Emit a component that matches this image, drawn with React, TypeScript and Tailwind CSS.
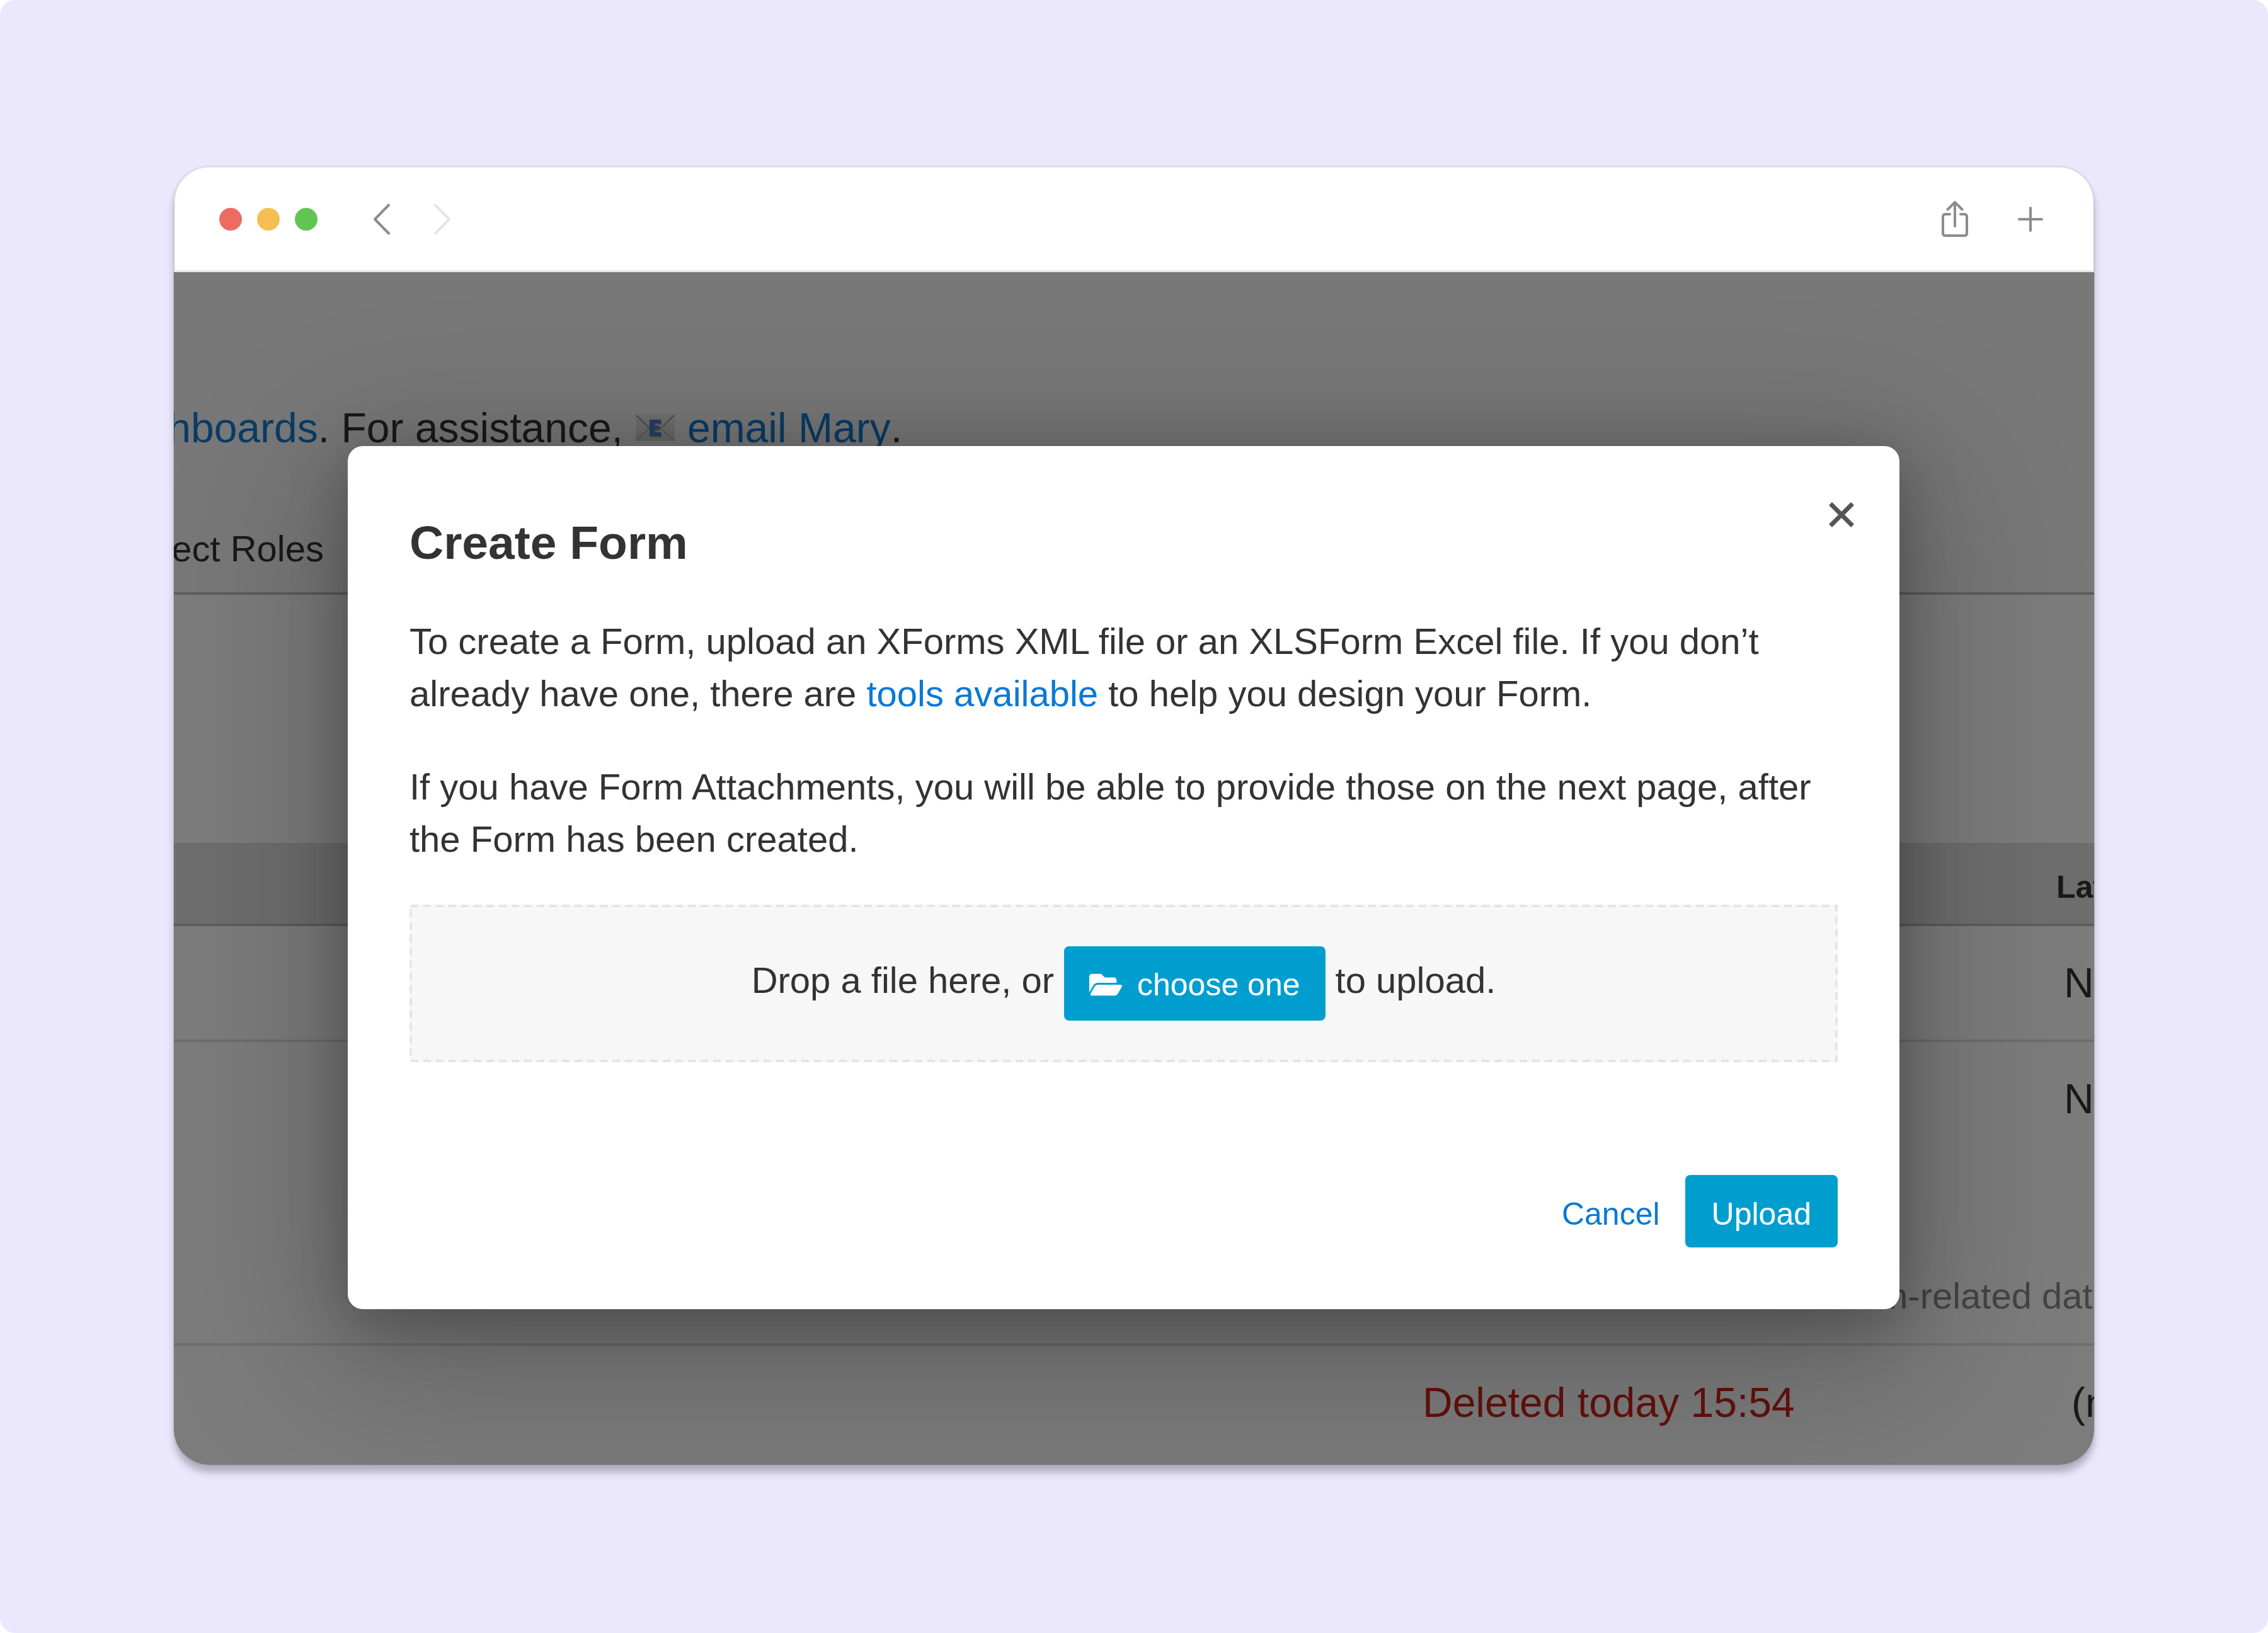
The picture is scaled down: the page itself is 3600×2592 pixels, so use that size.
import { FaFolderOpen } from 'react-icons/fa';

const rows = [
  { id: 1, status: '', latest: 'None' },
  { id: 2, status: '', latest: 'None' },
];

function WindowBar() {
  return (
    <div className="flex h-[168px] items-center justify-between rounded-t-[56px] border-2 border-b-3 border-[#e5e5e5] bg-white pr-[78px] pl-[70px]">
      <div className="flex items-center">
        <div className="flex gap-6">
          <span className="size-9 rounded-full bg-[#ed6b60]" />
          <span className="size-9 rounded-full bg-[#f4bf50]" />
          <span className="size-9 rounded-full bg-[#61c554]" />
        </div>
        <button aria-label="Back" className="ml-[87px]">
          <svg width="30" height="52" viewBox="0 0 30 52" fill="none" stroke="#8c8c8c" strokeWidth="4" strokeLinecap="round" strokeLinejoin="round">
            <path d="M26 3.500L4 26L26 48.500" />
          </svg>
        </button>
        <button aria-label="Forward" className="ml-[66px]">
          <svg width="30" height="52" viewBox="0 0 30 52" fill="none" stroke="#e5e5e5" strokeWidth="4" strokeLinecap="round" strokeLinejoin="round">
            <path d="M4 3.500L26 26L4 48.500" />
          </svg>
        </button>
      </div>
      <div className="flex items-center gap-[78px]">
        <button aria-label="Share">
          <svg width="42" height="58" viewBox="0 0 42 58" fill="none" stroke="#8c8c8c" strokeWidth="4" strokeLinecap="round" strokeLinejoin="round">
            <path d="M21 40V2M9.500 13.500L21 2L32.500 13.500" />
            <path d="M13 21H6Q2 21 2 25V51Q2 55 6 55H36Q40 55 40 51V25Q40 21 36 21H30" />
          </svg>
        </button>
        <button aria-label="New tab">
          <svg width="42" height="42" viewBox="0 0 42 42" fill="none" stroke="#8c8c8c" strokeWidth="4" strokeLinecap="round">
            <path d="M21 3V39M3 21H39" />
          </svg>
        </button>
      </div>
    </div>
  );
}

function MailIcon() {
  return (
    <svg width="62" height="42" viewBox="0 0 62 42" className="mx-5 shrink-0">
      <defs>
        <linearGradient id="paper" x1="0" y1="0" x2="0" y2="1">
          <stop offset="0" stopColor="#e6e6e6" />
          <stop offset="1" stopColor="#d0d0d0" />
        </linearGradient>
      </defs>
      <rect width="62" height="42" fill="url(#paper)" />
      <path d="M1 41L20 24M61 41L42 24" fill="none" stroke="#b4b4b4" strokeWidth="2" />
      <path d="M1 1L22 22Q31 30 40 22L61 1" fill="none" stroke="#999999" strokeWidth="2" />
      <path d="M23 10H41V16H31V20H39V25H31V30H41V36H23Z" fill="#a0a0a0" />
      <path d="M22 8H40V14H30V18H38V23H30V28H40V34H22Z" fill="#4a80c4" />
    </svg>
  );
}

function ProjectPage() {
  return (
    <div className="overflow-hidden bg-[#f8f8f8] pb-[9px] whitespace-nowrap">
      <div className="border-b-4 border-[#bbbbbb] bg-[#f1f1f1] pt-[200px] pb-7">
        <div className="flex w-[1156px] items-center justify-end text-[66px] leading-[94px]">
          <a href="#dashboards" className="text-[#1479cc]">dashboards</a>
          <span>. For assistance,</span>
          <MailIcon />
          <a href="#mary" className="text-[#1479cc]">email Mary</a>
          <span>.</span>
        </div>
        <div className="mt-[103px] flex w-[238px] justify-end text-[58px] leading-[83px]">
          <a href="#roles">Project Roles</a>
        </div>
      </div>

      <table className="mt-[394px] w-full table-fixed text-left text-[66px] leading-[94px]">
        <colgroup>
          <col />
          <col className="w-[1010px]" />
          <col className="w-[60px]" />
        </colgroup>
        <thead>
          <tr className="border-b-4 border-[#bbbbbb] bg-[#dddddd] text-[50px] leading-[72px]">
            <th className="pt-[34px] pb-[22px]" />
            <th />
            <th className="pt-[34px] pb-[22px] font-bold">Latest</th>
          </tr>
        </thead>
        <tbody>
          {rows.map((row) => (
            <tr key={row.id} className="border-b-4 border-[#dddddd] last:border-b-0">
              <td />
              <td>{row.status}</td>
              <td className="pt-[43px] pb-[43px] pl-3">{row.latest}</td>
            </tr>
          ))}
        </tbody>
      </table>

      <p className="mt-[181px] -mr-[30px] pb-[34px] text-right text-[58px] leading-[83px] text-[#888888]">Form-related data</p>

      <table className="w-full table-fixed border-t-4 border-[#dddddd] text-left text-[66px] leading-[94px]">
        <colgroup>
          <col />
          <col className="w-[1010px]" />
          <col className="w-[60px]" />
        </colgroup>
        <tbody>
          <tr>
            <td />
            <td className="pl-1 text-[#c9231a]">Deleted today 15:54</td>
            <td className="pt-[43px] pb-[43px] pl-6">(none)</td>
          </tr>
        </tbody>
      </table>
    </div>
  );
}

function CreateFormModal() {
  return (
    <div
      role="dialog"
      aria-labelledby="create-form-title"
      className="relative rounded-3xl bg-white px-[98px] pt-[111px] pb-[98px] shadow-[0_60px_300px_40px_rgba(0,0,0,0.22),0_20px_90px_0_rgba(0,0,0,0.26)]"
    >
      <button aria-label="Close" className="absolute top-[81px] right-16 p-2">
        <svg width="40" height="40" viewBox="0 0 40 40" stroke="#555555" strokeWidth="7">
          <path d="M2.500 2.500L37.500 37.500M37.500 2.500L2.500 37.500" />
        </svg>
      </button>
      <h1 id="create-form-title" className="text-[75px] leading-[84px] font-bold">Create Form</h1>
      <div className="mt-[73px] flex flex-col gap-[65px] text-[58px] leading-[83px]">
        <p>
          To create a Form, upload an XForms XML file or an XLSForm Excel file. If you don’t
          <br />
          already have one, there are <a href="#tools" className="text-[#0b79d6]">tools available</a> to help you design your Form.
        </p>
        <p>
          If you have Form Attachments, you will be able to provide those on the next page, after
          <br />
          the Form has been created.
        </p>
      </div>
      <div className="relative mt-[63px] flex items-center justify-center gap-4 bg-[#f7f7f7] py-[66px] text-[58px] leading-[83px]">
        <svg aria-hidden="true" className="pointer-events-none absolute inset-0 size-full" fill="none">
          <rect x="2" y="2" className="h-[calc(100%-4px)] w-[calc(100%-4px)]" stroke="#e5e5e5" strokeWidth="4" strokeDasharray="12 8" />
        </svg>
        <span className="pb-3">Drop a file here, or</span>
        <button className="flex h-[118px] items-center gap-6 rounded-lg bg-[#009ecf] px-10 pt-1 text-[50px] leading-[72px] text-white">
          <FaFolderOpen className="size-[52px]" />
          choose one
        </button>
        <span className="pb-3">to upload.</span>
      </div>
      <div className="mt-[179px] flex items-center justify-end gap-10 text-[50px] leading-[72px]">
        <button className="pt-2 text-[#0b79d6]">Cancel</button>
        <button className="h-[115px] rounded-lg bg-[#009ecf] px-[42px] pt-2 text-white">Upload</button>
      </div>
    </div>
  );
}

export default function App() {
  return (
    <div className="bg-white">
      <main className="rounded-3xl bg-[#ebe7fd] px-[276px] pt-[264px] pb-[267px] font-['Liberation_Sans',Arial,sans-serif] text-[#333333]">
        <div className="overflow-hidden rounded-[56px] shadow-[0_0_0_1px_rgba(0,0,0,0.1),0_12px_12px_rgba(0,0,0,0.25)]">
          <WindowBar />
          <div className="relative">
            <ProjectPage />
            <div className="absolute inset-0 overflow-hidden bg-black/50 pt-[276px] pr-[309px] pl-[276px]">
              <CreateFormModal />
            </div>
          </div>
        </div>
      </main>
    </div>
  );
}
